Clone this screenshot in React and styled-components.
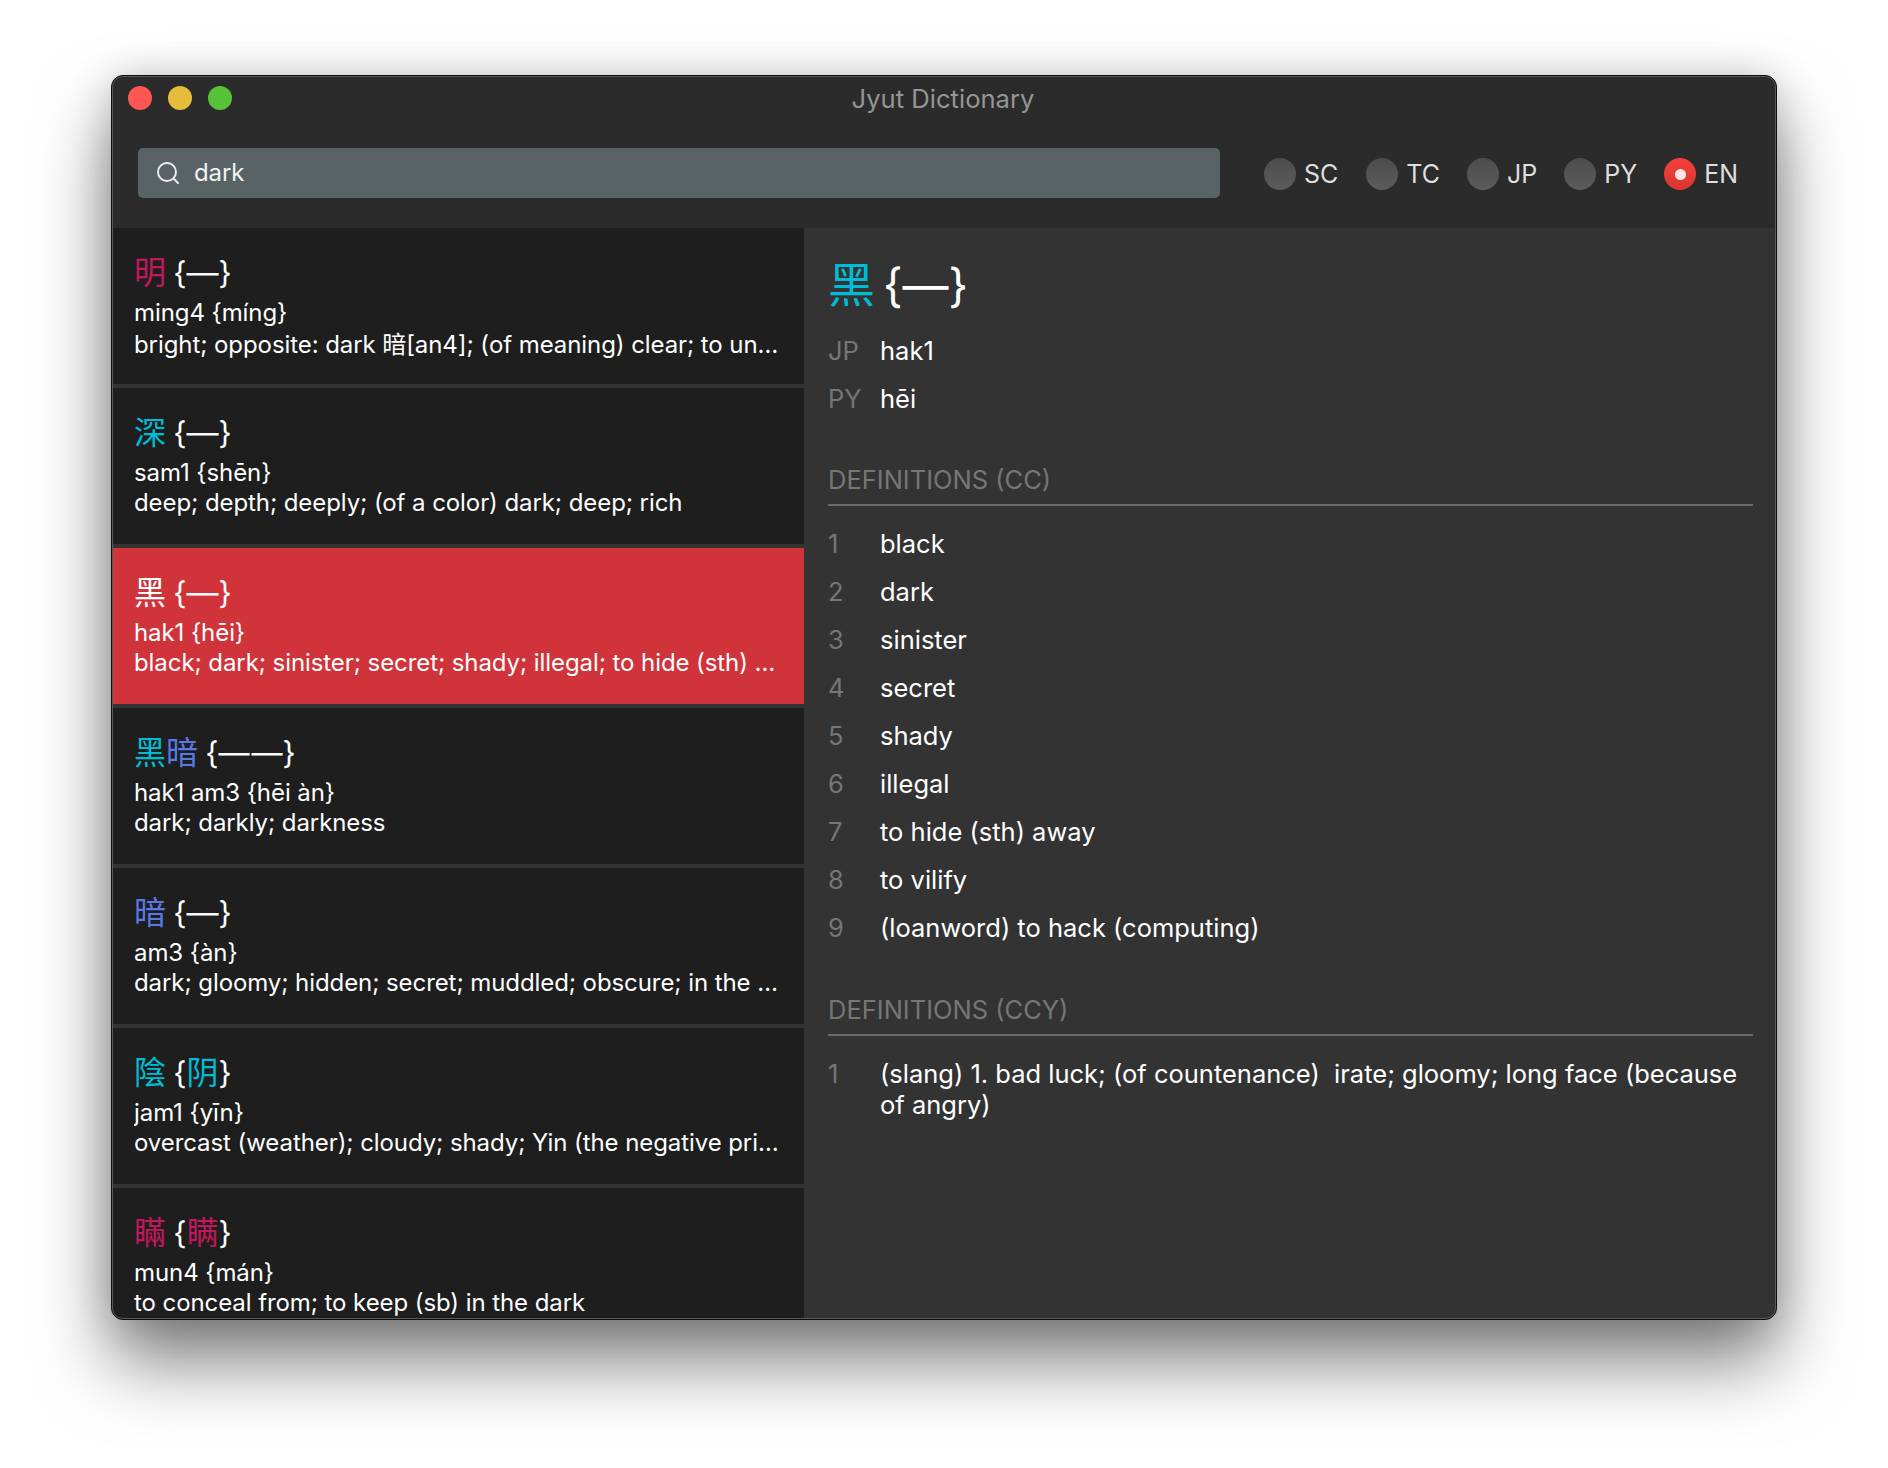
import React from "react";
import styled, { createGlobalStyle } from "styled-components";

const Global = createGlobalStyle`
  html, body { margin: 0; padding: 0; background: #fff; }
  body { font-family: Inter, "Noto Sans CJK TC", sans-serif; -webkit-font-smoothing: antialiased; }
  * { box-sizing: border-box; }
`;

const FONT = `Inter, "Noto Sans CJK TC", "Noto Sans CJK SC", sans-serif`;
const TONES = { 1: "#00bcd4", 2: "#64dd17", 3: "#5a78e8", 4: "#c2185b", 0: "#fff" };

const Page = styled.div`
  width: 1888px;
  height: 1468px;
  padding: 75px 111px 148px 111px;
  background: #fff;
  overflow: hidden;
`;
const Window = styled.div`
  width: 100%;
  height: 100%;
  display: flex;
  flex-direction: column;
  border: 1px solid #0e0e0e;
  border-radius: 12px;
  background: #2b2b2b;
  overflow: hidden;
  box-shadow: 0 42px 72px rgba(0, 0, 0, 0.5), 0 0 40px rgba(0, 0, 0, 0.16);
  position: relative;
  &::after {
    content: "";
    position: absolute;
    inset: 0;
    border-radius: 11px;
    border: 1px solid #5a5a5a;
    pointer-events: none;
  }
`;
const TitleBar = styled.div`
  height: 44px;
  display: flex;
  align-items: center;
  justify-content: center;
  position: relative;
  flex: none;
`;
const Lights = styled.div`
  position: absolute;
  left: 16px;
  top: 10px;
  display: flex;
  gap: 16px;
`;
const Light = styled.span`
  width: 24px;
  height: 24px;
  border-radius: 50%;
  background: ${(p) => p.$color};
`;
const Title = styled.div`
  font: 400 25.6px ${FONT};
  color: #959595;
  margin-right: 2px;
`;
const Toolbar = styled.div`
  flex: none;
  height: 108px;
  padding: 28px 38px 30px 26px;
  display: flex;
  align-items: flex-start;
  justify-content: space-between;
`;
const SearchBox = styled.div`
  width: 1082px;
  height: 50px;
  border-radius: 5px;
  background: #596365;
  display: flex;
  align-items: center;
  padding: 0 0 1px 19px;
  gap: 15px;
  color: #f2f2f2;
  font: 400 24px ${FONT};
  letter-spacing: -0.1px;
`;
const Radios = styled.div`
  display: flex;
  align-items: center;
  margin-top: 10px;
`;
const RadioItem = styled.div`
  display: flex;
  align-items: center;
  gap: 8px;
  margin-left: ${(p) => p.$gap}px;
  font: 400 25px ${FONT};
  color: #dedede;
`;
const RadioDot = styled.span`
  width: 32px;
  height: 32px;
  border-radius: 50%;
  display: flex;
  align-items: center;
  justify-content: center;
  background: ${(p) =>
    p.$on ? "linear-gradient(#f5413a, #d9352f)" : "linear-gradient(#4c4c4c, #5c5c5c)"};
  &::after {
    content: "";
    width: 11px;
    height: 11px;
    border-radius: 50%;
    background: #ffe6e4;
    display: ${(p) => (p.$on ? "block" : "none")};
  }
`;
const Body = styled.div`
  flex: 1;
  min-height: 0;
  display: flex;
  background: #333;
`;
const List = styled.div`
  width: 692px;
  flex: none;
  height: 100%;
  overflow: hidden;
  background: #333;
`;
const Row = styled.div`
  height: 156px;
  margin-bottom: 4px;
  padding: 23px 22px 0 22px;
  background: ${(p) => (p.$active ? "#d0343a" : "#1e1e1e")};
  color: #fff;
  overflow: hidden;
`;
const RowHead = styled.div`
  font: 400 31px/44px ${FONT};
  height: 47px;
  word-spacing: -1.5px;
`;
const Han = styled.span`
  color: ${(p) => p.$color};
`;
const HanGlyph = styled(Han)`
  font-size: 32px;
`;
const Dashes = styled.span`
  letter-spacing: 2px;
  margin-right: -2px;
`;
const RowLine = styled.div`
  font: 400 24px/30px ${FONT};
  letter-spacing: -0.08px;
  margin-top: ${(p) => (p.$mixed ? 2 : 0)}px;
  white-space: nowrap;
  overflow: hidden;
  text-overflow: ellipsis;
`;
const Detail = styled.div`
  flex: 1;
  padding: 21px 23px 0 24px;
  color: #fff;
`;
const DetailHead = styled.div`
  font: 400 46px/72px ${FONT};
  height: 72px;
  margin-bottom: 14px;
  word-spacing: -5px;
`;
const DetailGlyph = styled(Han)`
  font-size: 47px;
`;
const Grid = styled.div`
  display: grid;
  grid-template-columns: 52px 1fr;
  row-gap: 17px;
  font: 400 25.5px/31px ${FONT};
`;
const Key = styled.div`
  color: #767676;
`;
const Section = styled.div`
  margin-top: ${(p) => p.$top}px;
  padding-bottom: 9px;
  margin-bottom: 22px;
  border-bottom: 2px solid #6a6a6a;
  font: 400 25.5px/31px ${FONT};
  color: #767676;
`;

const rows = [
  { h: [["明", 4]], t: [["—", 0]], a: "ming4 {míng}", b: "bright; opposite: dark 暗[an4]; (of meaning) clear; to understand; next; public; openly; strange", mixed: true },
  { h: [["深", 1]], t: [["—", 0]], a: "sam1 {shēn}", b: "deep; depth; deeply; (of a color) dark; deep; rich" },
  { h: [["黑", 1]], t: [["—", 0]], a: "hak1 {hēi}", b: "black; dark; sinister; secret; shady; illegal; to hide (sth) away; to vilify; (loanword) to hack", active: true },
  { h: [["黑", 1], ["暗", 3]], t: [["——", 0]], a: "hak1 am3 {hēi àn}", b: "dark; darkly; darkness" },
  { h: [["暗", 3]], t: [["—", 0]], a: "am3 {àn}", b: "dark; gloomy; hidden; secret; muddled; obscure; in the dark; to be ignorant" },
  { h: [["陰", 1]], t: [["阴", 1]], a: "jam1 {yīn}", b: "overcast (weather); cloudy; shady; Yin (the negative principle of Yin and Yang)" },
  { h: [["瞞", 4]], t: [["瞒", 4]], a: "mun4 {mán}", b: "to conceal from; to keep (sb) in the dark" },
];

const cc = ["black", "dark", "sinister", "secret", "shady", "illegal", "to hide (sth) away", "to vilify", "(loanword) to hack (computing)"];
const radios = [["SC", 0, false], ["TC", 28, false], ["JP", 27, false], ["PY", 27, false], ["EN", 27, true]];

const SearchIcon = () => (
  <svg width="22" height="22" viewBox="0 0 22 22" fill="none" stroke="#f0f0f0" strokeWidth="1.9" strokeLinecap="round">
    <circle cx="10" cy="10" r="9" />
    <line x1="16.6" y1="16.6" x2="21" y2="21" />
  </svg>
);

export default function App() {
  return (
    <Page>
      <Global />
      <Window>
        <TitleBar>
          <Lights>
            <Light $color="#fc5753" />
            <Light $color="#e4bd3b" />
            <Light $color="#58c13a" />
          </Lights>
          <Title>Jyut Dictionary</Title>
        </TitleBar>
        <Toolbar>
          <SearchBox>
            <SearchIcon />
            dark
          </SearchBox>
          <Radios>
            {radios.map(([l, g, on]) => (
              <RadioItem key={l} $gap={g}>
                <RadioDot $on={on} />
                {l}
              </RadioItem>
            ))}
          </Radios>
        </Toolbar>
        <Body>
          <List>
            {rows.map((r, i) => (
              <Row key={i} $active={r.active}>
                <RowHead>
                  {r.h.map(([c, t], j) => (
                    <HanGlyph key={j} $color={r.active ? "#fff" : TONES[t]}>{c}</HanGlyph>
                  ))}
                  {" {"}
                  {r.t.map(([c, t], j) => (
                    c.length > 1
                      ? <Dashes key={j}>{c}</Dashes>
                      : <HanGlyph key={j} $color={TONES[t]}>{c}</HanGlyph>
                  ))}
                  {"}"}
                </RowHead>
                <RowLine>{r.a}</RowLine>
                <RowLine $mixed={r.mixed}>{r.b}</RowLine>
              </Row>
            ))}
          </List>
          <Detail>
            <DetailHead>
              <DetailGlyph $color={TONES[1]}>黑</DetailGlyph> {"{—}"}
            </DetailHead>
            <Grid>
              <Key>JP</Key><div>hak1</div>
              <Key>PY</Key><div>hēi</div>
            </Grid>
            <Section $top={50}>DEFINITIONS (CC)</Section>
            <Grid>
              {cc.map((d, i) => (
                <React.Fragment key={i}>
                  <Key>{i + 1}</Key><div>{d}</div>
                </React.Fragment>
              ))}
            </Grid>
            <Section $top={51}>DEFINITIONS (CCY)</Section>
            <Grid>
              <Key>1</Key>
              <div>(slang) 1. bad luck; (of countenance)&nbsp; irate; gloomy; long face (because of angry)</div>
            </Grid>
          </Detail>
        </Body>
      </Window>
    </Page>
  );
}
